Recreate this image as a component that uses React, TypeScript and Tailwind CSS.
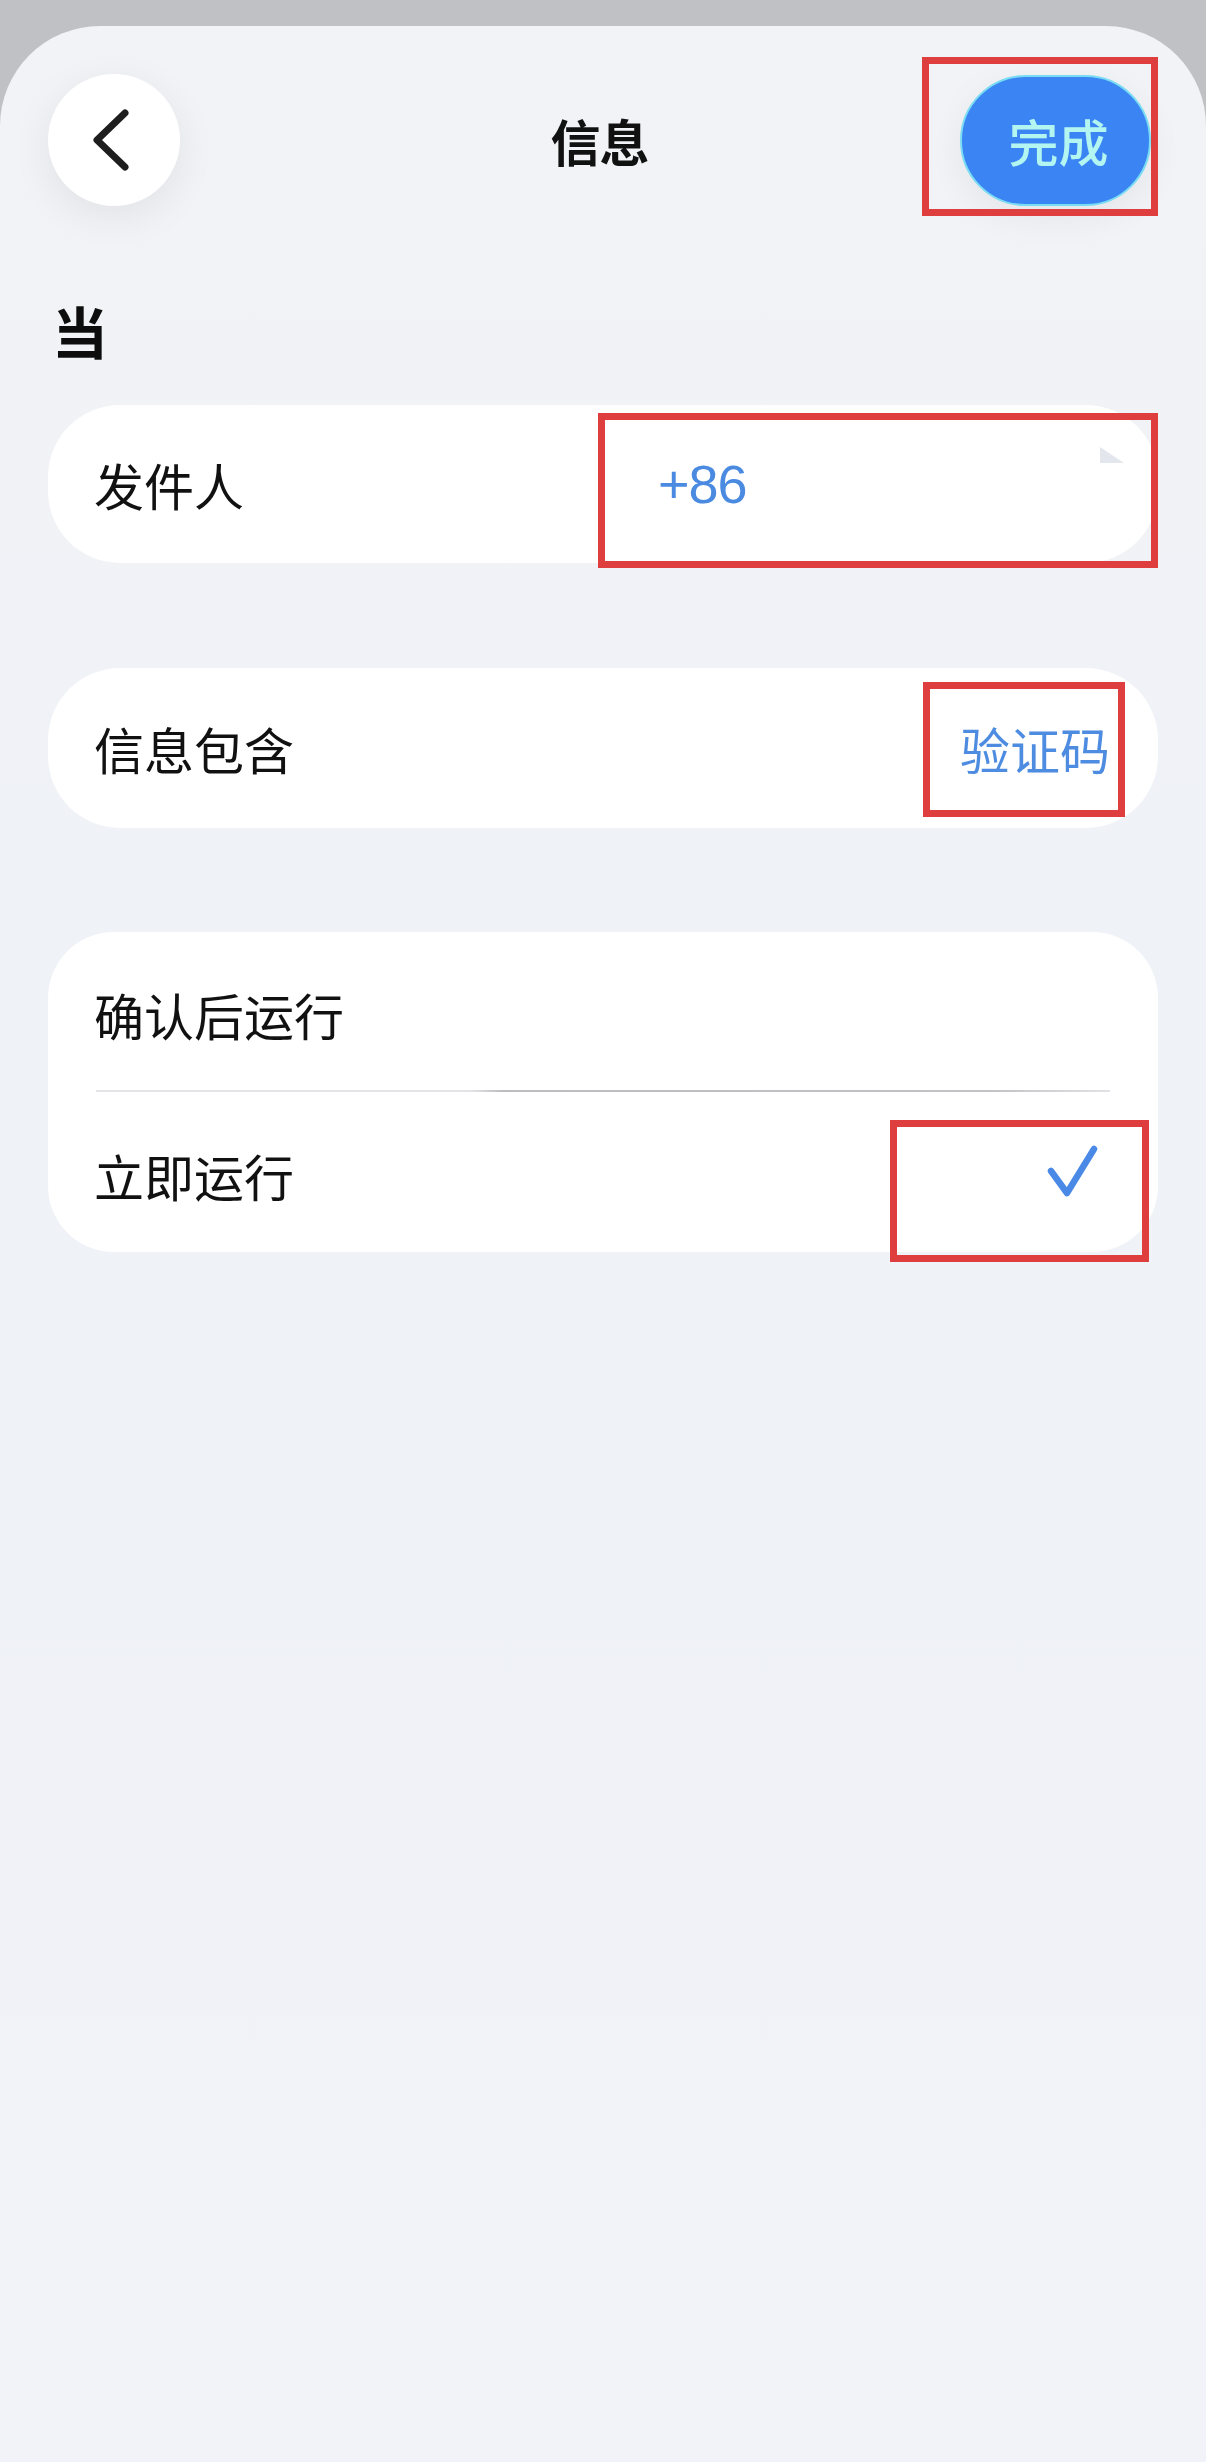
import React from "react";

const CJK = '"Noto Sans CJK SC", "Noto Sans", sans-serif';

function RedBox({ className }: { className: string }) {
  return <div className={"absolute border-[7px] border-[#df3e3e] pointer-events-none " + className} />;
}

export default function App() {
  return (
    <div
      className="relative w-[1206px] h-[2462px] bg-[#c0c1c5] pt-[26px] overflow-hidden"
      style={{ fontFamily: CJK }}
    >
      <div className="h-full rounded-t-[100px] bg-[linear-gradient(to_bottom,#f2f3f6,#eff2f7_40%,#f1f3f8)] flex flex-col">
        {/* Header */}
        <div className="grid grid-cols-[1fr_auto_1fr] items-center pl-[48px] pr-[55px] pt-[48px]">
          <div className="justify-self-start w-[132px] h-[132px] rounded-full bg-white shadow-[0_10px_40px_rgba(0,0,0,0.07)] flex items-center justify-center">
            <svg width="44" height="66" viewBox="0 0 44 66" className="ml-[-6px]">
              <path d="M36 6 L8 33 L36 60" fill="none" stroke="#1e1e1e" strokeWidth="7" strokeLinecap="round" strokeLinejoin="round" />
            </svg>
          </div>
          <div className="text-[50px] leading-none font-bold text-[#111] tracking-[-1px]">信息</div>
          <div className="justify-self-end w-[191px] h-[131px] rounded-full bg-[#3a85f3] border-2 border-[#7adcf3] shadow-[0_10px_36px_rgba(0,0,0,0.06)] flex items-center justify-center">
            <span className="text-[50px] leading-none font-medium text-[#b2f5f1] ml-[6px]">完成</span>
          </div>
        </div>

        {/* Section heading */}
        <div className="mt-[96px] pl-[52px] text-[56px] leading-none font-bold text-[#0d0d0d]">当</div>

        <div className="px-[48px] mt-[47px] flex flex-col">
          {/* Sender */}
          <div className="relative h-[158px] rounded-[72px] bg-white flex items-center pl-[46px]">
            <div className="w-[564px] shrink-0 text-[50px] leading-none text-[#111]">发件人</div>
            <div className="text-[54px] leading-none text-[#4a8ae0] tracking-[-1px]" style={{ fontFamily: '"Liberation Sans", Arial, sans-serif' }}>
              +86
            </div>
            <svg className="absolute left-[1052px] top-[42px]" width="24" height="18" viewBox="0 0 24 18">
              <path d="M0 0 L24 16 L0 16 Z" fill="#e3e6ec" />
            </svg>
          </div>

          {/* Message contains */}
          <div className="mt-[105px] h-[160px] rounded-[72px] bg-white flex items-center justify-between pl-[46px] pr-[48px]">
            <div className="text-[50px] leading-none text-[#111]">信息包含</div>
            <div className="text-[50px] leading-none text-[#4d8ce0]">验证码</div>
          </div>

          {/* Run options */}
          <div className="mt-[104px] rounded-[66px] bg-white flex flex-col">
            <div className="h-[158px] flex items-center pl-[46px] pt-[6px]">
              <div className="text-[50px] leading-none text-[#111]">确认后运行</div>
            </div>
            <div className="mx-[48px] h-[2px] bg-[linear-gradient(to_right,#e4e4e8_0%,#e4e4e8_37%,#bdbdc1_40%,#c2c2c6_88%,#e2e2e6_100%)]" />
            <div className="h-[160px] flex items-center justify-between pl-[46px] pr-[60px]">
              <div className="text-[50px] leading-none text-[#111] pt-[6px]">立即运行</div>
              <svg width="52" height="52" viewBox="0 0 52 52" className="mt-[-2px]">
                <path d="M5 26 L21 48 L48 4" fill="none" stroke="#4a89e6" strokeWidth="6.5" strokeLinecap="round" strokeLinejoin="round" />
              </svg>
            </div>
          </div>
        </div>
      </div>

      {/* Annotation boxes */}
      <RedBox className="left-[922px] top-[57px] w-[236px] h-[159px]" />
      <RedBox className="left-[598px] top-[413px] w-[560px] h-[155px]" />
      <RedBox className="left-[923px] top-[682px] w-[202px] h-[135px]" />
      <RedBox className="left-[890px] top-[1120px] w-[259px] h-[142px]" />
    </div>
  );
}
